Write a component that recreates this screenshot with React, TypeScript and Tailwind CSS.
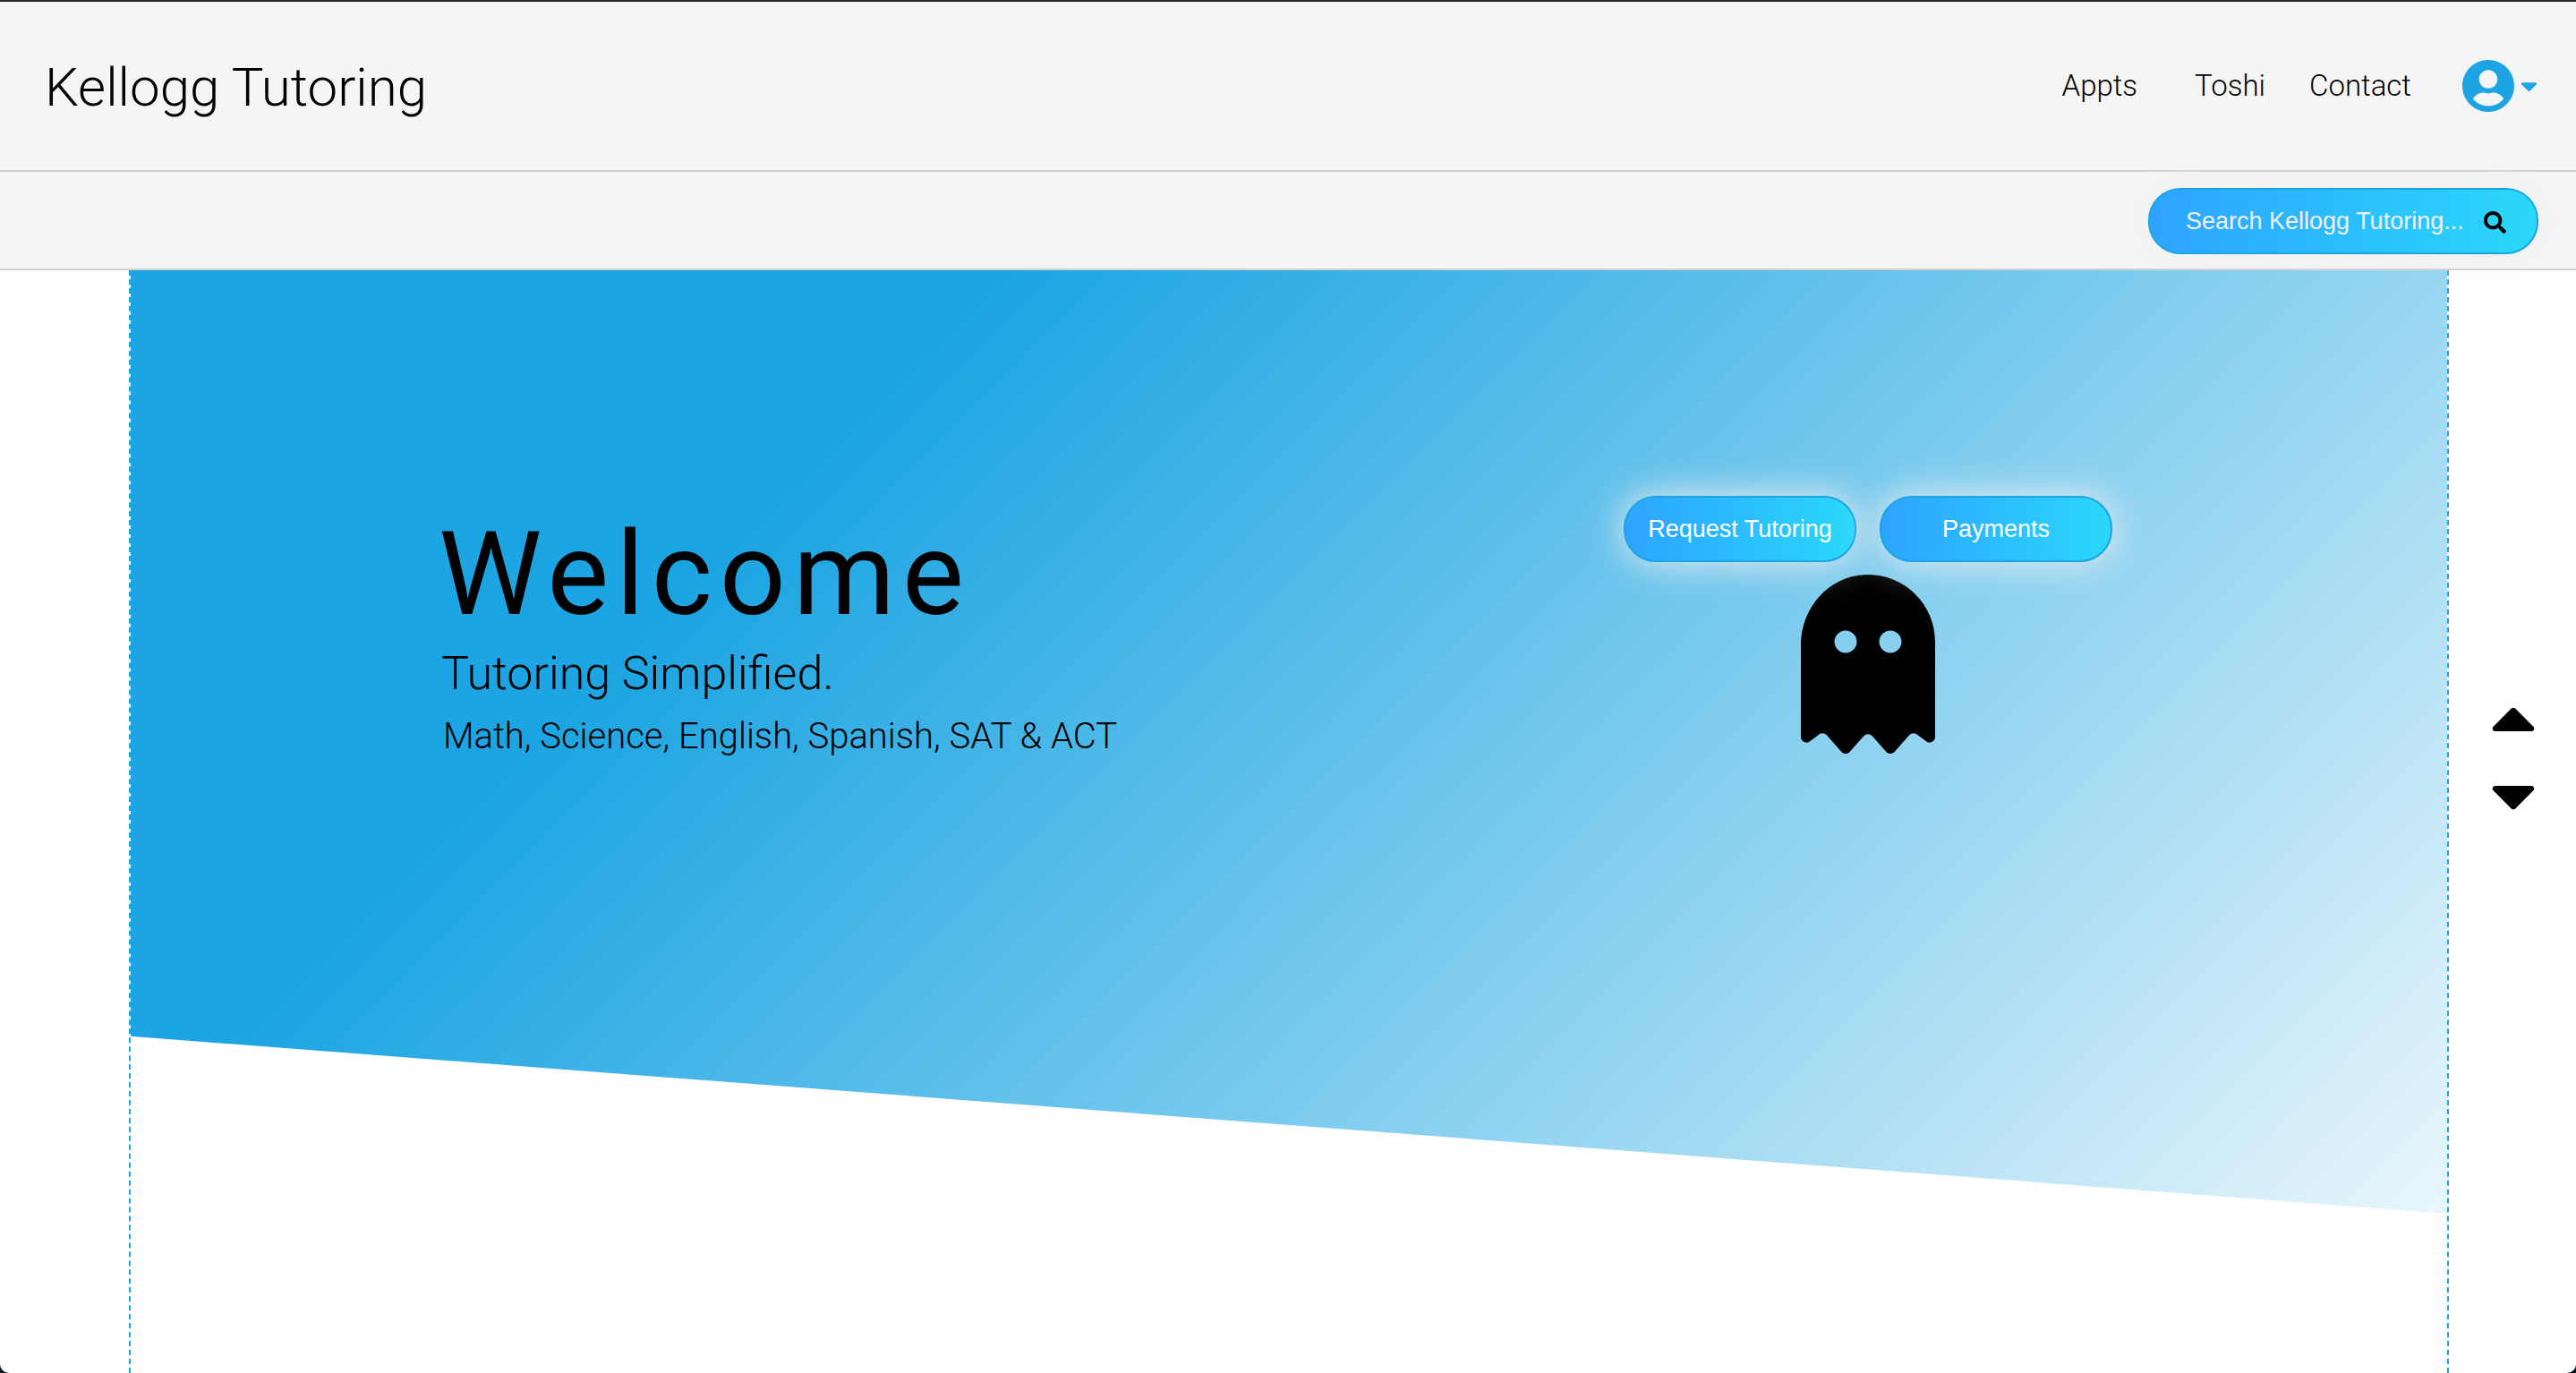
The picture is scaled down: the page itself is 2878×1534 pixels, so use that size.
import React from "react";
import { FaCaretDown, FaCaretUp, FaGhost, FaSearch, FaUserCircle } from "react-icons/fa";

function Header() {
  return (
    <header className="flex h-[192px] items-center justify-between border-t-2 border-b-2 border-t-[#2a2829] border-b-[#cfcfcf] bg-[#f5f5f5] pr-[43px] pl-[50px] font-light">
      <a href="#home" className="pt-[4px] text-[60px] leading-[72px]">
        Kellogg Tutoring
      </a>
      <nav aria-label="Main" className="flex items-center text-[33px] leading-[40px]">
        <a href="#appts" className="mr-[64px]">
          Appts
        </a>
        <a href="#toshi" className="mr-[49px]">
          Toshi
        </a>
        <a href="#contact" className="mr-[57px]">
          Contact
        </a>
        <button type="button" aria-label="Account menu" className="flex items-center gap-[7px] text-[#1ca5e2]">
          <FaUserCircle className="h-[60px] w-[58px]" />
          <FaCaretDown className="h-[30px] w-[19px]" />
        </button>
      </nav>
    </header>
  );
}

function SearchBar() {
  return (
    <div className="flex h-[110px] items-center justify-end border-b-2 border-[#cfcfcf] bg-[#f5f5f5] pt-[2px] pr-[42px]">
      <form
        role="search"
        className="relative flex h-[74px] w-[436px] items-center rounded-[36px] border-2 border-[#1ca5e2] bg-linear-to-r from-[#2ea3ff] to-[#2bd8fa] bg-origin-border pr-[34px] pl-[40px] font-['Liberation_Sans',Arial,sans-serif] shadow-[0_0_40px_#eeeeee]"
      >
        <input
          type="text"
          aria-label="Search Kellogg Tutoring"
          placeholder="Search Kellogg Tutoring..."
          className="h-[48px] min-w-0 flex-1 bg-transparent text-[27px] leading-[40px] text-[#f0f0f0] outline-none placeholder:text-[#f0f0f0]"
        />
        <button type="submit" aria-label="Search" className="pt-[2px]">
          <FaSearch className="h-[25px] w-[25px]" />
        </button>
      </form>
    </div>
  );
}

function PillButton({ children }: { children: React.ReactNode }) {
  return (
    <button
      type="button"
      className="relative z-10 h-[74px] w-[260px] rounded-[36px] border-2 border-[#1ca5e2] bg-linear-to-r from-[#2ea3ff] to-[#2bd8fa] bg-origin-border font-['Liberation_Sans',Arial,sans-serif] text-[27px] text-white shadow-[0_0_40px_#eeeeee]"
    >
      {children}
    </button>
  );
}

function Hero() {
  return (
    <section className="grid h-[1054px] grid-cols-2 bg-[linear-gradient(135deg,#1ca5e2_27%,#e9f6fc_100%)] [clip-path:polygon(0_0,100%_0,100%_100%,0_81.2%)]">
      <div className="pt-[264px] pl-[344px]">
        <h1 className="text-[130px] leading-[152px] tracking-[8px]">Welcome</h1>
        <p className="mt-[3px] pl-[3px] text-[52px] leading-[64px] font-light">Tutoring Simplified.</p>
        <p className="mt-[14px] pl-[5px] text-[40px] leading-[48px] font-light">
          Math, Science, English, Spanish, SAT &amp; ACT
        </p>
      </div>
      <div className="flex flex-col items-center pt-[252px]">
        <div className="flex gap-[26px]">
          <PillButton>Request Tutoring</PillButton>
          <PillButton>Payments</PillButton>
        </div>
        <FaGhost className="mt-[14px] h-[200px] w-[150px]" />
      </div>
    </section>
  );
}

export default function App() {
  return (
    <div className="bg-[#0b1418] font-[Roboto,sans-serif] text-black">
      <div className="flex min-h-screen flex-col overflow-hidden rounded-b-[10px] bg-white">
        <Header />
        <SearchBar />
        <main className="ml-[5%] w-[calc(90%+2px)] flex-1 border-x-2 border-dashed border-[#1ca5e2]">
          <Hero />
        </main>
      </div>
      <div className="fixed top-[762px] right-[45px] flex flex-col gap-[6px]">
        <button type="button" aria-label="Previous section">
          <FaCaretUp className="h-[80px] w-[50px]" />
        </button>
        <button type="button" aria-label="Next section">
          <FaCaretDown className="h-[80px] w-[50px]" />
        </button>
      </div>
    </div>
  );
}
